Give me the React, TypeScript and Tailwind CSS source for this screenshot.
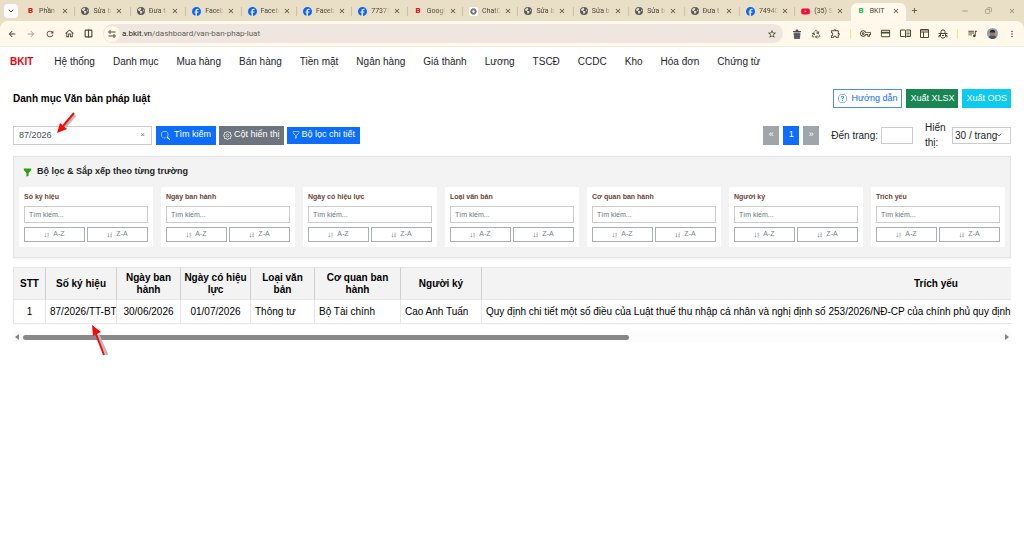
import { useState } from "react";
import type { ReactNode } from "react";
import {
  BsFunnel,
  BsFunnelFill,
  BsGear,
  BsQuestionCircle,
  BsSearch,
  BsSortAlphaDown,
  BsSortAlphaDownAlt,
} from "react-icons/bs";
import { FaEarthAmericas, FaFacebook, FaYoutube } from "react-icons/fa6";
import {
  MdAdd,
  MdArrowBack,
  MdArrowForward,
  MdClose,
  MdCreditCard,
  MdMoreVert,
  MdOutlineExtension,
  MdOutlineHome,
  MdOutlineVpnKey,
  MdQueueMusic,
  MdRefresh,
  MdStarBorder,
} from "react-icons/md";
import { ChevronDown, Columns2, Copy, Minus, Recycle } from "lucide-react";

type TabIcon = "bkit" | "globe" | "facebook" | "chat" | "youtube";

const TABS: { icon: TabIcon; title: string }[] = [
  { icon: "bkit", title: "Phần" },
  { icon: "globe", title: "Sửa b" },
  { icon: "globe", title: "Đưa t" },
  { icon: "facebook", title: "Faceb" },
  { icon: "facebook", title: "Faceb" },
  { icon: "facebook", title: "Faceb" },
  { icon: "facebook", title: "77371" },
  { icon: "bkit", title: "Googl" },
  { icon: "chat", title: "ChatG" },
  { icon: "globe", title: "Sửa b" },
  { icon: "globe", title: "Sửa b" },
  { icon: "globe", title: "Sửa b" },
  { icon: "globe", title: "Đưa t" },
  { icon: "facebook", title: "74940" },
  { icon: "youtube", title: "(35) S" },
];

const MENU = [
  "Hệ thống",
  "Danh mục",
  "Mua hàng",
  "Bán hàng",
  "Tiền mặt",
  "Ngân hàng",
  "Giá thành",
  "Lương",
  "TSCĐ",
  "CCDC",
  "Kho",
  "Hóa đơn",
  "Chứng từ",
];

const FIELDS = [
  "Số ký hiệu",
  "Ngày ban hành",
  "Ngày có hiệu lực",
  "Loại văn bản",
  "Cơ quan ban hành",
  "Người ký",
  "Trích yếu",
];

const ROWS = [
  {
    id: 1,
    code: "87/2026/TT-BTC",
    issued: "30/06/2026",
    effective: "01/07/2026",
    kind: "Thông tư",
    agency: "Bộ Tài chính",
    signer: "Cao Anh Tuấn",
    summary:
      "Quy định chi tiết một số điều của Luật thuế thu nhập cá nhân và nghị định số 253/2026/NĐ-CP của chính phủ quy định chi tiết",
  },
];

function Favicon({ icon }: { icon: TabIcon }) {
  if (icon === "facebook") return <FaFacebook className="size-[9px] shrink-0 text-[#0866ff]" />;
  if (icon === "youtube") return <FaYoutube className="size-[9px] shrink-0 text-[#ff0033]" />;
  if (icon === "globe") return <FaEarthAmericas className="size-2 shrink-0 text-[#55585c]" />;
  if (icon === "chat") {
    return (
      <svg viewBox="0 0 16 16" className="size-[9px] shrink-0">
        <rect width="16" height="16" rx="3" fill="#fff" />
        <g fill="none" stroke="#555" strokeWidth="1.2">
          <ellipse cx="8" cy="8" rx="5.4" ry="3" />
          <ellipse cx="8" cy="8" rx="5.4" ry="3" transform="rotate(60 8 8)" />
          <ellipse cx="8" cy="8" rx="5.4" ry="3" transform="rotate(120 8 8)" />
        </g>
      </svg>
    );
  }
  return <span className="w-[9px] shrink-0 text-center text-[8px] font-bold text-red-600">B</span>;
}

function BrowserBar() {
  return (
    <header className="bg-[#e8dfc6] font-[Roboto,'Noto_Sans',sans-serif] text-[#4a4636]">
      {/* thanh thẻ */}
      <div className="flex h-[21px] items-center">
        <div className="w-5 shrink-0 pl-1">
          <button aria-label="Tìm thẻ" className="flex size-[14px] items-center justify-center rounded bg-[#fffafa]">
            <ChevronDown className="size-2" strokeWidth={3} />
          </button>
        </div>
        {TABS.map((tab, i) => (
          <div key={i} className="flex h-full min-w-0 flex-1 items-center pt-px pl-[6px]">
            <Favicon icon={tab.icon} />
            <span className="ml-1 w-[19px] mask-r-from-60% text-[7px] whitespace-nowrap">
              {tab.title}
            </span>
            <button aria-label="Đóng thẻ" className="ml-[3px]">
              <MdClose className="size-2" />
            </button>
            <span
              className={
                i === TABS.length - 1 ? "hidden" : "ml-auto h-[9px] w-px bg-[#c9c0a6]"
              }
            />
          </div>
        ))}
        <div className="flex h-[18px] min-w-0 flex-1 items-center self-end rounded-t-md bg-[#fff8eb] pb-[2px] pl-[6px]">
          <span className="w-[9px] text-center text-[8px] font-bold text-[#12b84b]">B</span>
          <span className="ml-1 w-[19px] text-[7px]">BKIT</span>
          <button aria-label="Đóng thẻ" className="ml-[3px]">
            <MdClose className="size-2" />
          </button>
        </div>
        <div className="flex w-[118px] shrink-0 items-center pl-1">
          <button aria-label="Thẻ mới">
            <MdAdd className="size-[9px]" />
          </button>
          <div className="ml-auto flex items-center gap-4 pr-2 text-[#8b836b]">
            <button aria-label="Thu nhỏ">
              <Minus className="size-2" />
            </button>
            <button aria-label="Khôi phục">
              <Copy className="size-[7px] -scale-x-100" />
            </button>
            <button aria-label="Đóng">
              <MdClose className="size-2" />
            </button>
          </div>
        </div>
      </div>

      {/* thanh địa chỉ */}
      <div className="flex h-[26px] items-center rounded-t-lg border-b border-[#f3eadf] bg-[#fff8eb] text-[#4c472f]">
        <div className="flex items-center gap-[9px] pl-[7px]">
          <MdArrowBack className="size-[10px]" />
          <MdArrowForward className="size-[10px] text-[#aaa391]" />
          <MdRefresh className="size-[10px]" />
          <MdOutlineHome className="size-[11px]" />
          <Columns2 className="size-[9px]" strokeWidth={3} />
        </div>
        <div className="ml-[10px] flex h-[19px] flex-1 items-center rounded-full bg-[#eee6df] pr-[6px] pl-px">
          <span className="flex size-4 items-center justify-center rounded-full bg-[#fff8eb]">
            <svg viewBox="0 0 16 16" className="size-2" fill="none" stroke="currentColor" strokeWidth="2">
              <circle cx="4" cy="4" r="2.4" />
              <path d="M8 4h7M1 12h7" />
              <circle cx="12" cy="12" r="2.4" />
            </svg>
          </span>
          <span className="ml-[2px] text-[8px] text-[#67615a]">
            <span className="text-[#2c2924]">a.bkit.vn</span>/dashboard/van-ban-phap-luat
          </span>
          <MdStarBorder className="ml-auto size-[10px]" />
        </div>
        <div className="flex items-center gap-[9px] pr-[7px] pl-[9px]">
          <svg viewBox="0 0 20 20" className="size-[10px]">
            <path d="M2 4h5l1-3h4l1 3h5v2H2z" fill="#4c4f55" />
            <path d="M3 7h14l-1 13H4z" fill="#6c6f76" />
            <path d="M7 7v13M10 7v13M13 7v13M4 11h12M4 15h12" stroke="#3d4046" strokeWidth="0.8" />
          </svg>
          <Recycle className="size-[10px]" />
          <MdOutlineExtension className="size-[11px]" />
          <span className="h-[10px] w-px bg-[#fbdf78]" />
          <MdOutlineVpnKey className="size-[11px]" />
          <MdCreditCard className="size-[11px]" />
          {/* chế độ đọc */}
          <svg viewBox="0 0 22 20" className="size-[11px]" fill="none" stroke="currentColor" strokeWidth="2">
            <path d="M1 3h8l2 1 2-1h8v13h-8l-2 2-2-2H1zM11 4v13" />
            <path d="M13 7h6M13 10h6M13 13h6" strokeWidth="1.4" />
          </svg>
          <svg viewBox="0 0 18 18" className="size-[9px]" fill="none" stroke="currentColor" strokeWidth="2">
            <path d="M1 1h16v16H1zM1 6h16M7 6v11" />
            <path d="M1 3h16" strokeWidth="1" />
          </svg>
          {/* gỡ lỗi */}
          <svg viewBox="0 0 20 20" className="size-[10px]" fill="none" stroke="currentColor" strokeWidth="2">
            <path d="M6 8V5l2-3h4l2 3v3M1 9h18M5 10v5l3 3h4l3-3v-5" />
            <path d="M5 13H2v4M15 13h3v4M8 13h4" />
          </svg>
          <span className="h-[10px] w-px bg-[#fbdf78]" />
          <MdQueueMusic className="size-[11px]" />
          <svg viewBox="0 0 20 20" className="size-[11px]">
            <circle cx="10" cy="10" r="10" fill="#8ea3a8" />
            <path d="M3 17a8 8 0 0 1 14 0a10 10 0 0 1-14 0z" fill="#41525e" />
            <ellipse cx="10" cy="10" rx="4" ry="5" fill="#a5705c" />
            <path d="M5 8a5 5 0 0 1 10 0z" fill="#302c2c" />
          </svg>
          <MdMoreVert className="size-[10px]" />
        </div>
      </div>
    </header>
  );
}

function RedArrow({ className, children }: { className: string; children: ReactNode }) {
  return (
    <svg className={className} fill="#f80808" stroke="#f80808">
      {children}
    </svg>
  );
}

function FilterCard({ label }: { label: string }) {
  return (
    <div className="min-w-0 flex-1 bg-white px-[5px] pt-1 pb-[5px]">
      <label className="block text-[7px] leading-[11px] font-bold text-[#6b4435]">
        {label}
        <input
          type="text"
          placeholder="Tìm kiếm..."
          className="mt-1 block h-[17px] w-full border border-[#ccc] px-1 text-[7px] font-normal text-gray-700 placeholder:text-[#6c757d]"
        />
      </label>
      <div className="mt-1 flex gap-[2px] text-[7px] text-[#7b838a]">
        <button className="flex h-[15px] flex-1 items-center justify-center gap-[3px] border border-[#a9aeb3]">
          <BsSortAlphaDown className="size-[6px]" />
          A-Z
        </button>
        <button className="flex h-[15px] flex-1 items-center justify-center gap-[3px] border border-[#a9aeb3]">
          <BsSortAlphaDownAlt className="size-[6px]" />
          Z-A
        </button>
      </div>
    </div>
  );
}

export default function App() {
  const [keyword, setKeyword] = useState("87/2026");

  const th = "h-[33px] border-r border-[#cfcfcf] px-px font-bold";
  const td = "h-6 overflow-hidden border-r border-[#e6e6e6] px-1 whitespace-nowrap";

  return (
    <div className="min-h-screen bg-white font-['Liberation_Sans',Arial,sans-serif] text-[10px] text-[#212529]">
      <BrowserBar />

      <nav className="flex h-7 items-center pl-[10px] whitespace-nowrap">
        <a href="#" className="mr-[21px] font-bold text-red-600">
          BKIT
        </a>
        <div className="flex gap-[18px]">
          {MENU.map((item) => (
            <a key={item} href="#">
              {item}
            </a>
          ))}
        </div>
      </nav>

      <main className="px-[13px] pt-[14px]">
        <div className="flex items-center">
          <h1 className="text-[10px] font-bold text-black">Danh mục Văn bản pháp luật</h1>
          <div className="ml-auto flex gap-1 text-[9px]">
            <button className="flex h-[19px] items-center gap-1 border border-[#4b8cfb] px-1 text-[#0d6efd]">
              <BsQuestionCircle className="size-[9px]" />
              Hướng dẫn
            </button>
            <button className="h-[19px] bg-[#198754] px-1 text-white">Xuất XLSX</button>
            <button className="h-[19px] bg-[#0dcaf0] px-1 text-white">Xuất ODS</button>
          </div>
        </div>

        {/* tìm kiếm + phân trang */}
        <div className="mt-3 flex h-[30px] items-center gap-1">
          <div className="relative flex h-[19px] w-[139px] items-center border border-[#ccc]">
            <input
              aria-label="Từ khóa"
              value={keyword}
              onChange={(e) => setKeyword(e.target.value)}
              className="h-full min-w-0 flex-1 pl-[5px] text-[9px] text-[#495057] outline-none"
            />
            <button
              aria-label="Xóa"
              onClick={() => setKeyword("")}
              className="px-[6px] text-[8px] text-[#6c757d]"
            >
              ×
            </button>
            <RedArrow className="absolute -top-4 left-[42px] h-6 w-5">
              <path d="M19 4L9 16" stroke="#bbb" strokeWidth="3" fill="none" />
              <path d="M18 2L7 15" strokeWidth="2" fill="none" />
              <path d="M1 22L4 12L11 18z" stroke="none" />
            </RedArrow>
          </div>
          <div className="flex items-center gap-[3px] text-[9px] whitespace-nowrap text-white">
            <button className="flex h-[19px] items-center gap-1 bg-[#0d6efd] px-[5px]">
              <BsSearch className="size-[9px]" />
              Tìm kiếm
            </button>
            <button className="flex h-[19px] items-center gap-[2px] bg-[#6c757d] px-1">
              <BsGear className="size-[9px]" />
              Cột hiển thị
            </button>
            <button className="flex h-[17px] items-center gap-[2px] bg-[#0d6efd] px-[5px]">
              <BsFunnel className="size-2" />
              Bộ lọc chi tiết
            </button>
          </div>

          <div className="ml-auto flex items-center">
            <div className="flex gap-1 text-[9px] text-white">
              <button className="h-[19px] w-4 bg-[#a0a5ab]">«</button>
              <button className="h-[19px] w-4 bg-[#0d6efd]">1</button>
              <button className="h-[19px] w-4 bg-[#a0a5ab]">»</button>
            </div>
            <label className="ml-3 flex items-center gap-[3px]">
              Đến trang:
              <input type="text" className="h-[17px] w-8 border border-[#ccc] px-1" />
            </label>
            <label htmlFor="page-size" className="ml-3 w-[23px] leading-[15px]">
              Hiển thị:
            </label>
            <div className="relative ml-1">
              <select
                id="page-size"
                className="block h-[17px] w-[59px] appearance-none border border-[#ccc] pl-[2px]"
              >
                <option>30 / trang</option>
              </select>
              <ChevronDown className="pointer-events-none absolute top-1 right-2 size-2" />
            </div>
          </div>
        </div>

        {/* bộ lọc theo trường */}
        <section className="mt-[6px] border border-[#e3e3e3] bg-[#f3f3f3] px-[5px] pb-[10px] shadow-xs">
          <h2 className="flex h-[30px] items-center gap-[5px] pl-1 text-[9px] font-bold">
            <BsFunnelFill className="size-[9px] text-[#2e9e0b]" />
            Bộ lọc & Sắp xếp theo từng trường
          </h2>
          <div className="flex gap-2">
            {FIELDS.map((field) => (
              <FilterCard key={field} label={field} />
            ))}
          </div>
        </section>

        <div className="relative mt-[9px]">
          <div className="overflow-hidden">
            <table className="w-[1378px] table-fixed border-separate border-spacing-0 border-l border-[#e6e6e6] leading-3 text-black">
              <colgroup>
                <col className="w-8" />
                <col className="w-[71px]" />
                <col className="w-16" />
                <col className="w-[70px]" />
                <col className="w-16" />
                <col className="w-[86px]" />
                <col className="w-[81px]" />
                <col />
              </colgroup>
              <thead className="bg-[#f3f3f3]">
                <tr>
                  {["STT", ...FIELDS].map((name) => (
                    <th key={name} className={`${th} border-y border-y-[#e6e6e6]`}>
                      {name}
                    </th>
                  ))}
                </tr>
              </thead>
              <tbody>
                {ROWS.map((row) => (
                  <tr key={row.id}>
                    <td className={`${td} border-b text-center`}>{row.id}</td>
                    <td className={`${td} border-b`}>{row.code}</td>
                    <td className={`${td} border-b text-center`}>{row.issued}</td>
                    <td className={`${td} border-b text-center`}>{row.effective}</td>
                    <td className={`${td} border-b`}>{row.kind}</td>
                    <td className={`${td} border-b`}>{row.agency}</td>
                    <td className={`${td} border-b`}>{row.signer}</td>
                    <td className={`${td} border-b`}>{row.summary}</td>
                  </tr>
                ))}
              </tbody>
            </table>
          </div>

          {/* thanh cuộn ngang */}
          <div className="mt-2 flex h-[10px] items-center gap-1 bg-[#fcfcfc] px-[2px]">
            <svg viewBox="0 0 4 6" className="h-[6px] w-1" fill="#858585">
              <path d="M4 0v6L0 3z" />
            </svg>
            <div className="flex-1">
              <div className="h-[5px] w-[62%] rounded-full bg-[#888]" />
            </div>
            <svg viewBox="0 0 4 6" className="h-[6px] w-1" fill="#858585">
              <path d="M0 0v6l4-3z" />
            </svg>
          </div>

          <RedArrow className="absolute top-[58px] left-[78px] h-8 w-5">
            <path d="M16 30L7 10" stroke="#bbb" strokeWidth="3" fill="none" />
            <path d="M13 30L5 9" strokeWidth="2" fill="none" />
            <path d="M1 0L10 7L2 11z" stroke="none" />
          </RedArrow>
        </div>
      </main>
    </div>
  );
}
